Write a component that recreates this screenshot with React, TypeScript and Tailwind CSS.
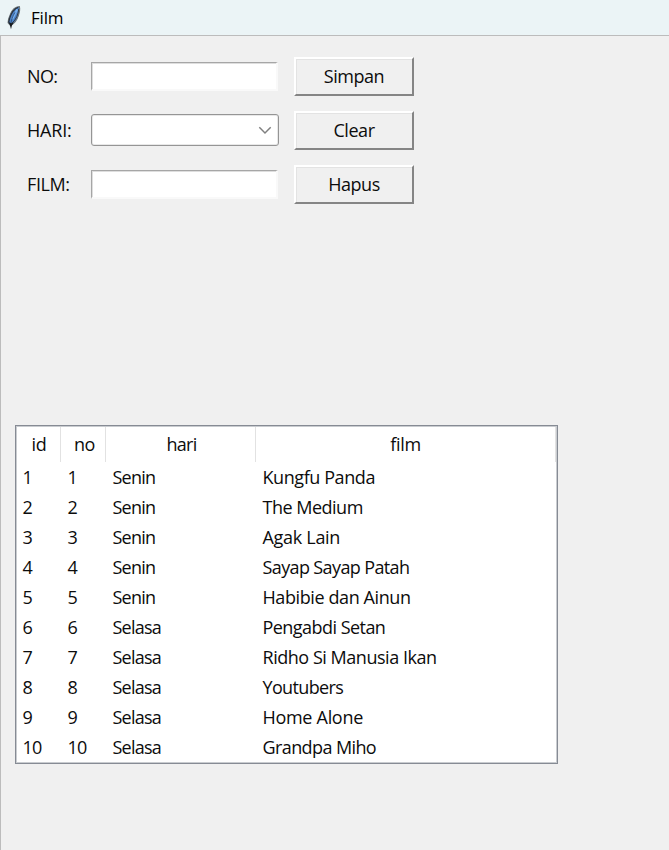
type Film = { id: number; no: number; hari: string; film: string; fit: string };

const films: Film[] = [
  { id: 1, no: 1, hari: "Senin", film: "Kungfu Panda", fit: "tracking-[-0.42px]" },
  { id: 2, no: 2, hari: "Senin", film: "The Medium", fit: "tracking-[-0.5px]" },
  { id: 3, no: 3, hari: "Senin", film: "Agak Lain", fit: "tracking-[-0.3px]" },
  { id: 4, no: 4, hari: "Senin", film: "Sayap Sayap Patah", fit: "tracking-[-0.62px]" },
  { id: 5, no: 5, hari: "Senin", film: "Habibie dan Ainun", fit: "tracking-[-0.4px]" },
  { id: 6, no: 6, hari: "Selasa", film: "Pengabdi Setan", fit: "tracking-[-0.54px]" },
  { id: 7, no: 7, hari: "Selasa", film: "Ridho Si Manusia Ikan", fit: "tracking-[-0.47px]" },
  { id: 8, no: 8, hari: "Selasa", film: "Youtubers", fit: "tracking-[-0.65px]" },
  { id: 9, no: 9, hari: "Selasa", film: "Home Alone", fit: "tracking-[-0.3px]" },
  { id: 10, no: 10, hari: "Selasa", film: "Grandpa Miho", fit: "tracking-[-0.6px]" },
];

const columns = "grid grid-cols-[44px_45px_150px_300px]";

function Feather() {
  return (
    <svg className="ml-[6px] h-6 w-4" viewBox="0 0 16 24">
      <path d="M13.4 0.6C9.6 0.8 6 4 4.2 8.8C3 11.4 2 14.2 2.1 16.8L4.6 19.6C8 17.6 10.9 14.4 12.1 10.2C13.4 6.6 14.1 3 13.4 0.6Z" fill="#4a81c8" stroke="#6d7577" strokeWidth="1.1" />
      <path d="M12.2 1.4C8.6 2.6 5.4 6.8 3.6 12.4L2.8 16.2" fill="none" stroke="#2b333c" strokeWidth="1.2" />
      <path d="M12.7 3C12.4 8 10.2 13.6 6.2 17" fill="none" stroke="#333b43" strokeWidth="1" />
      <path d="M11.3 3.2C9.6 6.2 8.4 9.6 6.2 13.2" fill="none" stroke="#78b0ee" strokeWidth="1.9" />
      <path d="M9 6.4C6.8 10 5.2 14 5 17.6" fill="none" stroke="#26405f" strokeWidth="0.7" />
      <path d="M2 15.4L3.8 18.8L5 23.2L5.9 19.4L7.6 16.6L5.2 17.2Z" fill="#171a1d" />
    </svg>
  );
}

function Entry() {
  return (
    <input className="h-[29px] w-[187px] border-t border-r-2 border-b-2 border-l border-t-[#a6a6a6] border-r-[#f9f9f9] border-b-[#f9f9f9] border-l-[#a6a6a6] bg-white px-1 shadow-[inset_1px_1px_0_#dedede] outline-none" />
  );
}

function Combo() {
  return (
    <button className="flex h-8 w-[188px] items-center justify-end rounded-[3px] border border-[#959595] bg-white pr-[6px] shadow-[inset_0_0_0_1px_#e8e8e8]">
      <svg className="h-[9px] w-[14px]" viewBox="0 0 14 9">
        <path d="M1.3 1.3L7 7L12.7 1.3" fill="none" stroke="#808080" strokeWidth="1.5" />
      </svg>
    </button>
  );
}

type RowProps = { label: string; labelFit: string; action: string; combo?: boolean };

function Row({ label, labelFit, action, combo = false }: RowProps) {
  return (
    <div className="flex h-[54px] items-center pl-[26px]">
      <label className={`w-16 ${labelFit}`}>{label}</label>
      <div className="w-[203px]">{combo ? <Combo /> : <Entry />}</div>
      <button className="mt-px h-[39px] w-[120px] border-2 border-t-white border-r-[#858585] border-b-[#858585] border-l-white bg-[#f0f0f0] pb-px tracking-[-0.45px] shadow-[inset_1px_1px_0_#e3e3e3]">
        {action}
      </button>
    </div>
  );
}

export default function App() {
  return (
    <div className="flex h-[850px] w-[669px] flex-col overflow-hidden bg-[#f0f0f0] font-['Open_Sans','Noto_Sans',sans-serif] text-[18px] leading-[24px] text-[#0c0c0c]">
      <header className="flex h-[35px] shrink-0 items-center bg-[#ebf4f6]">
        <Feather />
        <h1 className="ml-[9px] text-[17px] tracking-[-0.2px] text-black">Film</h1>
      </header>
      <main className="flex-1 border-t border-l border-[#bcbcbc] pt-[13px]">
        <form onSubmit={(e) => e.preventDefault()}>
          <Row label="NO:" labelFit="tracking-[-0.6px]" action="Simpan" />
          <Row label="HARI:" labelFit="tracking-[-0.2px]" action="Clear" combo />
          <Row label="FILM:" labelFit="tracking-[-0.4px]" action="Hapus" />
        </form>
        <section className="mt-[214px] ml-[14px] h-[339px] w-[543px] border border-[#868b94] bg-white shadow-[inset_0_0_0_1px_#c9ccd0]">
          <div className={`${columns} h-[36px] pt-px pl-px text-center leading-[34px]`}>
            <div className="border-r border-[#e2e2e2] pl-px tracking-[-0.3px]">id</div>
            <div className="border-r border-[#e2e2e2] pl-[3px] tracking-[-0.5px]">no</div>
            <div className="border-r border-[#e2e2e2] pl-[2px] tracking-[-0.7px]">hari</div>
            <div className="border-r border-[#e2e2e2] tracking-[-0.3px]">film</div>
          </div>
          {films.map((f) => (
            <div key={f.id} className={`${columns} h-[30px] pl-px leading-[30px]`}>
              <div className="pl-[5.5px] tracking-[-0.7px]">{f.id}</div>
              <div className="pl-[6.5px] tracking-[-0.7px]">{f.no}</div>
              <div className="pl-[6.5px] tracking-[-0.75px]">{f.hari}</div>
              <div className={`pl-[6.5px] whitespace-nowrap ${f.fit}`}>{f.film}</div>
            </div>
          ))}
        </section>
      </main>
    </div>
  );
}
